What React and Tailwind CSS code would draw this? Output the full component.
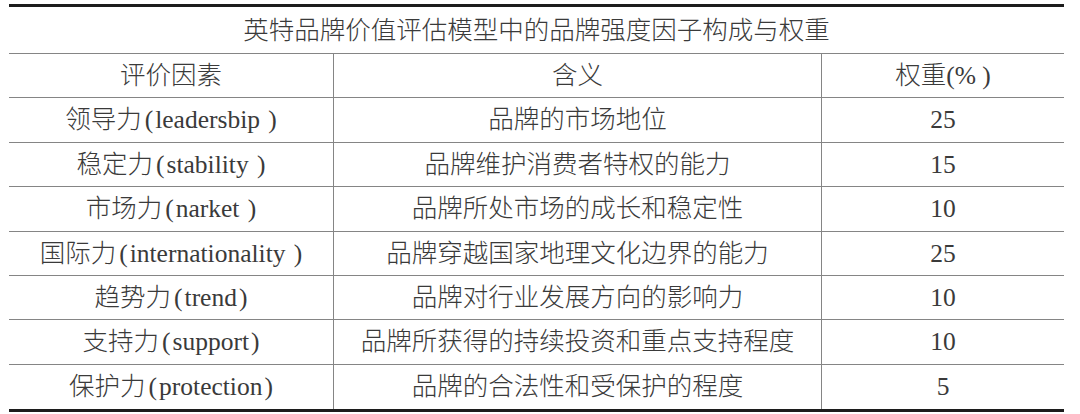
import React from "react";

const rows = [
  ["领导力", "leadersbip ", "品牌的市场地位", "25"],
  ["稳定力", "stability ", "品牌维护消费者特权的能力", "15"],
  ["市场力", "narket ", "品牌所处市场的成长和稳定性", "10"],
  ["国际力", "internationality ", "品牌穿越国家地理文化边界的能力", "25"],
  ["趋势力", "trend", "品牌对行业发展方向的影响力", "10"],
  ["支持力", "support", "品牌所获得的持续投资和重点支持程度", "10"],
  ["保护力", "protection", "品牌的合法性和受保护的程度", "5"],
];

const font = {
  fontFamily: '"Liberation Serif", "Noto Sans CJK SC", serif',
};

const Name = ({ zh, en }) => (
  <span className="whitespace-pre">
    {zh}
    <span className="ml-[3px] mr-[2px]">(</span>
    {en}
    <span className="ml-[2px]">)</span>
  </span>
);

const App = () => {
  const header = ["评价因素", "含义", "权重(% )"];
  return (
    <main className="h-[414px] w-[1080px] bg-white pt-[4px]" style={font}>
      <div className="ml-[9px] w-[1055px] border-y-[3px] border-[#1c1c1c] text-[25.5px] font-light leading-none text-[#3a3a3a]">
        <div className="flex h-[47px] items-center justify-center border-b border-[#858585] pt-[1px]">
          英特品牌价值评估模型中的品牌强度因子构成与权重
        </div>
        <div className="grid h-[44.4px] grid-cols-[325px_488px_242px] border-b border-[#858585]">
          <div className="flex items-center justify-center border-r border-[#858585]">
            {header[0]}
          </div>
          <div className="flex items-center justify-center border-r border-[#858585]">
            {header[1]}
          </div>
          <div className="flex items-center justify-center whitespace-pre">
            {header[2]}
          </div>
        </div>
        {rows.map((row, i) => (
          <div
            key={i}
            className={
              "grid h-[44.4px] grid-cols-[325px_488px_242px] " +
              (i < rows.length - 1 ? "border-b border-[#858585]" : "")
            }
          >
            <div className="flex items-center justify-center border-r border-[#858585]">
              <Name zh={row[0]} en={row[1]} />
            </div>
            <div className="flex items-center justify-center border-r border-[#858585]">
              {row[2]}
            </div>
            <div className="flex items-center justify-center">{row[3]}</div>
          </div>
        ))}
      </div>
    </main>
  );
};

export default App;
